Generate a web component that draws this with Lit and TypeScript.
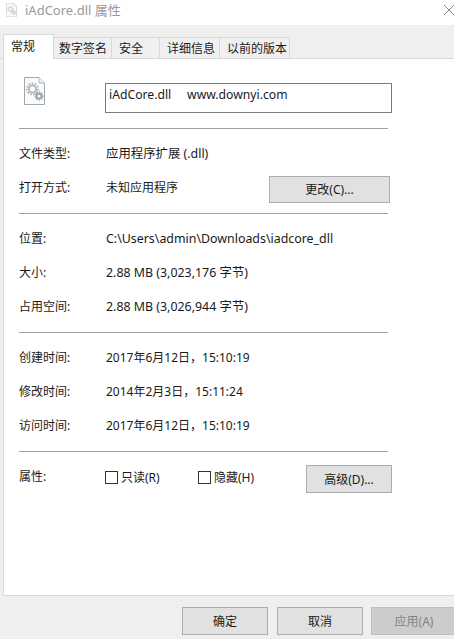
import { LitElement, html, css } from "lit";
import { customElement } from "lit/decorators.js";

const fileIcon = (cls: string) => html`<svg class=${cls} viewBox="0 0 21 28" aria-hidden="true">
  <path d="M.5.5H15L20.5 6V27.5H.5Z" fill="#f9fafb" stroke="#a2a7ac"/>
  <path d="M15 .5V6H20.5" fill="#eceef0" stroke="#b4b8bc"/>
  <circle cx="8.5" cy="12" r="3.6" fill="none" stroke="#b0b5ba" stroke-width="1.8"/>
  <circle cx="8.5" cy="12" r="5.6" fill="none" stroke="#b0b5ba" stroke-width="1.6" stroke-dasharray="1.8 1.3"/>
  <circle cx="15" cy="19" r="2.4" fill="none" stroke="#9aa1a7" stroke-width="1.7"/>
  <circle cx="15" cy="19" r="4" fill="none" stroke="#9aa1a7" stroke-width="1.3" stroke-dasharray="1.5 1.1"/>
</svg>`;

@customElement("app-root")
export class AppRoot extends LitElement {
  static styles = css`
    :host {
      display: flex;
      flex-direction: column;
      width: 454px;
      height: 639px;
      overflow: hidden;
      background: #efefef;
      color: #1a1a1a;
      font: 12px/17px "Noto Sans", "Noto Sans CJK SC", sans-serif;
    }
    .title {
      height: 25px;
      flex: none;
      background: #fff;
      display: flex;
      align-items: center;
      padding: 0 0 5px 6px;
      box-sizing: border-box;
      color: #9a9a9a;
      font-size: 13px;
    }
    .title-icon { width: 11px; height: 14px; margin-right: 8px; opacity: .75; }
    .title span { flex: 1; }
    .close { width: 10px; height: 10px; }
    .tabs {
      height: 34px;
      flex: none;
      display: flex;
      align-items: flex-end;
      padding: 0 0 0 3px;
      box-sizing: border-box;
      border-bottom: 1px solid #d9d9d9;
    }
    .tab {
      height: 22px;
      margin-bottom: -1px;
      box-sizing: border-box;
      background: #f0f0f0;
      border: 1px solid #d9d9d9;
      border-left: 0;
      padding-left: var(--inset);
      display: flex;
      align-items: center;
    }
    .tab.active {
      height: 25px;
      background: #fff;
      border-left: 1px solid #d9d9d9;
      border-bottom: 0;
      padding-bottom: 2px;
    }
    .panel {
      flex: 1;
      background: #fff;
      margin-left: 3px;
      border-left: 1px solid #d9d9d9;
      border-bottom: 1px solid #d9d9d9;
      padding: 0 0 0 15px;
    }
    .head {
      display: flex;
      height: 69px;
      box-sizing: border-box;
      padding: 18px 0 0 5px;
    }
    .big-icon { width: 21px; height: 28px; margin-right: 60px; }
    .name {
      width: 287px;
      height: 30px;
      margin-top: 6px;
      box-sizing: border-box;
      border: 1px solid #7a7a7a;
      padding: 2px 3px;
      white-space: pre;
      font-size: 12.2px;
    }
    .sep { height: 1px; width: 369px; background: #a0a0a0; }
    .section { padding: 7px 0 9px; width: 373px; }
    .section.last { padding-bottom: 0; }
    .row { display: flex; height: 34px; align-items: center; }
    .label { width: 87px; flex: none; }
    .value { flex: 1; }
    .value.wide { font-size: 12.4px; }
    .btn {
      flex: none;
      align-self: flex-start;
      box-sizing: border-box;
      width: 86px;
      height: 28px;
      background: #e1e1e1;
      border: 1px solid #adadad;
      display: flex;
      align-items: center;
      justify-content: center;
    }
    .row .btn { margin-top: 6px; }
    .row .btn.change { width: 121px; height: 27px; margin-right: 2px; }
    .check { display: flex; align-items: center; padding-top: 3px; }
    .box {
      width: 13px;
      height: 13px;
      box-sizing: border-box;
      border: 1px solid #333;
      margin: 0 3px 0 -1px;
    }
    .check.ro { width: 93px; }
    .check.hide { flex: 1; }
    .footer {
      height: 43px;
      flex: none;
      display: flex;
      gap: 9px;
      padding: 11px 0 0 182px;
      box-sizing: border-box;
    }
    .btn.disabled {
      background: #ccc;
      border-color: #bfbfbf;
      color: #838383;
      margin-left: -1px;
    }
  `;

  private row(label: string, value: string, wide = false) {
    return html`<div class="row"><div class="label">${label}</div><div class="value ${wide ? "wide" : ""}">${value}</div></div>`;
  }

  render() {
    return html`
      <div class="title">
        ${fileIcon("title-icon")}
        <span>iAdCore.dll 属性</span>
        <svg class="close" viewBox="0 0 10 10" aria-hidden="true">
          <path d="M0 0 10 10M10 0 0 10" stroke="#8c8c8c" fill="none"/>
        </svg>
      </div>
      <div class="tabs">
        <div class="tab active" style="width:51px;--inset:7px">常规</div>
        <div class="tab" style="width:58px;--inset:5px">数字签名</div>
        <div class="tab" style="width:48px;--inset:7px">安全</div>
        <div class="tab" style="width:60px;--inset:7px">详细信息</div>
        <div class="tab" style="width:70px;--inset:7px">以前的版本</div>
      </div>
      <div class="panel">
        <div class="head">
          ${fileIcon("big-icon")}
          <div class="name">iAdCore.dll     www.downyi.com</div>
        </div>
        <div class="sep"></div>
        <div class="section">
          ${this.row("文件类型:", "应用程序扩展 (.dll)", true)}
          <div class="row">
            <div class="label">打开方式:</div>
            <div class="value">未知应用程序</div>
            <div class="btn change">更改(C)...</div>
          </div>
        </div>
        <div class="sep"></div>
        <div class="section">
          ${this.row("位置:", "C:\\Users\\admin\\Downloads\\iadcore_dll", true)}
          ${this.row("大小:", "2.88 MB (3,023,176 字节)", true)}
          ${this.row("占用空间:", "2.88 MB (3,026,944 字节)", true)}
        </div>
        <div class="sep"></div>
        <div class="section">
          ${this.row("创建时间:", "2017年6月12日，15:10:19")}
          ${this.row("修改时间:", "2014年2月3日，15:11:24")}
          ${this.row("访问时间:", "2017年6月12日，15:10:19")}
        </div>
        <div class="sep"></div>
        <div class="section last">
          <div class="row">
            <div class="label">属性:</div>
            <div class="check ro"><span class="box"></span>只读(R)</div>
            <div class="check hide"><span class="box"></span>隐藏(H)</div>
            <div class="btn">高级(D)...</div>
          </div>
        </div>
      </div>
      <div class="footer">
        <div class="btn">确定</div>
        <div class="btn">取消</div>
        <div class="btn disabled">应用(A)</div>
      </div>
    `;
  }
}
